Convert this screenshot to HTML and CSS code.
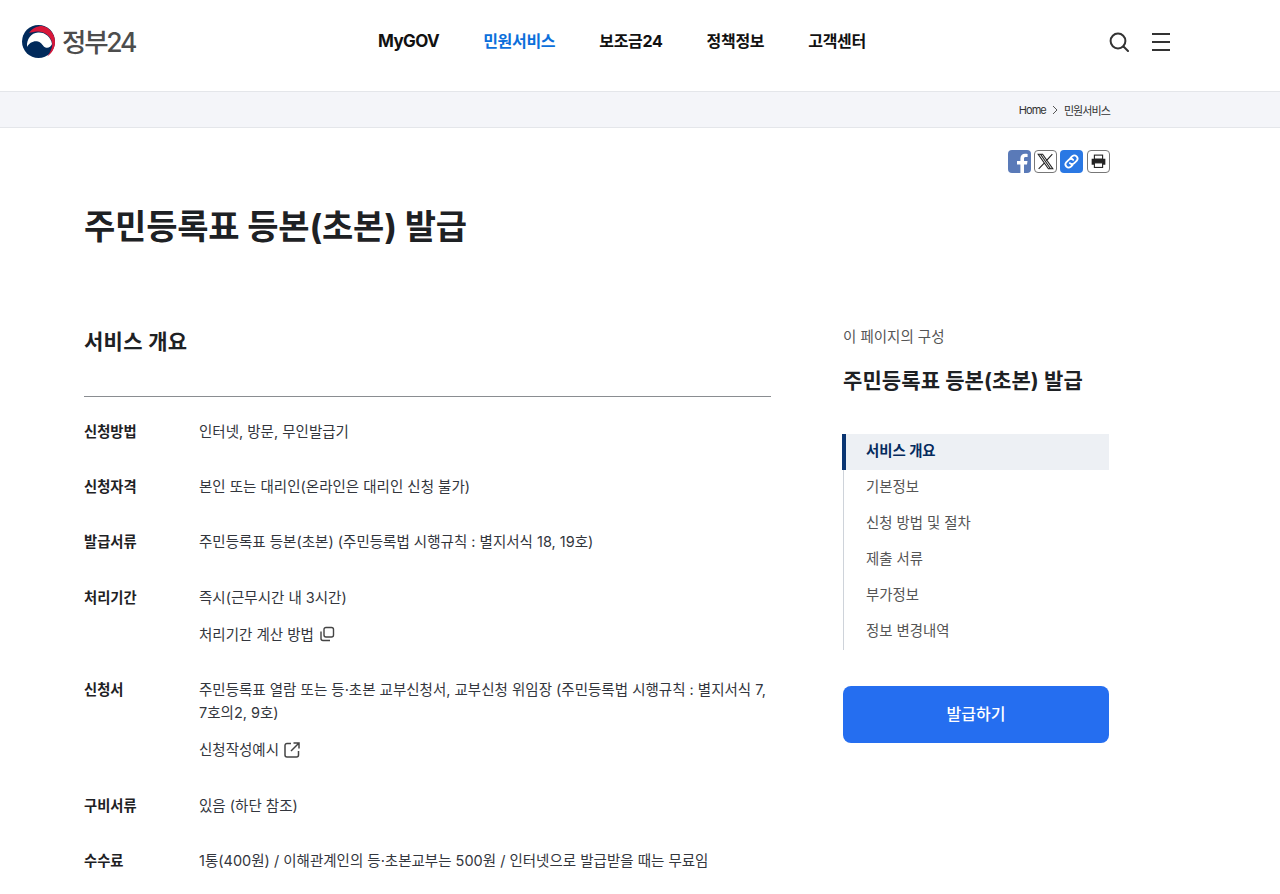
FILE: index.html
```html
<!DOCTYPE html>
<html lang="ko">
<head>
<meta charset="utf-8">
<title>주민등록표 등본(초본) 발급 | 정부24</title>
<link rel="stylesheet" href="styles.css">
</head>
<body>
<header class="header">
  <a class="logo" href="#">
    <svg class="logo-mark" viewBox="4 5 33 33" width="33" height="33" aria-hidden="true">
      <circle cx="20.500" cy="21.500" r="16.500" fill="#012a5b"/>
      <path d="M11 13C14 8.500 19 6 24 6c7.500 1 13 8 13 16 0 6-3 11-7.500 14.500C33 31 35 26 34 22 32 15 25 11 19 11.500 16 11.800 13 12.500 11 13Z" fill="#d8173a"/>
      <path d="M9 27C8.500 19 13 13 20 12.500 27 12 33 17 34 24 33 27 30 28.500 27.500 27.500 24.500 26.300 24 22.500 20 21.500 15.500 20.500 11 23 9 27Z" fill="#fff"/>
    </svg>
    <span class="logo-text">정부24</span>
  </a>
  <nav class="gnb">
    <a href="#" class="gnb-en">MyGOV</a>
    <a href="#" class="is-current">민원서비스</a>
    <a href="#">보조금24</a>
    <a href="#">정책정보</a>
    <a href="#">고객센터</a>
  </nav>
  <div class="header-tools">
    <svg viewBox="0 0 20 20" width="20" height="20" aria-hidden="true"><circle cx="9" cy="9" r="7.400" fill="none" stroke="#333" stroke-width="2"/><path d="M14.500 14.500L19 19" stroke="#333" stroke-width="2" stroke-linecap="round"/></svg>
    <svg viewBox="0 0 18 18" width="18" height="18" aria-hidden="true"><path d="M0 1h18M0 9h18M0 17h18" stroke="#333" stroke-width="2"/></svg>
  </div>
</header>
<div class="crumbs">
  <div class="crumbs-in">
    <span>Home</span>
    <svg viewBox="0 0 6 10" width="6" height="10" aria-hidden="true"><path d="M1 1l4 4-4 4" fill="none" stroke="#555" stroke-width="1"/></svg>
    <span>민원서비스</span>
  </div>
</div>
<div class="share">
  <span class="sns sns-fb"><svg viewBox="0 0 23 23" width="23" height="23" aria-hidden="true"><path d="M16 23v-8.500h3l.500-3.500H16V8.800c0-1 .400-1.700 1.800-1.700h1.800V4c-.5-.1-1.500-.2-2.600-.2-2.800 0-4.600 1.700-4.600 4.700V11H9v3.500h3.400V23z" fill="#fff"/></svg></span>
  <span class="sns sns-line"><svg viewBox="0 0 23 23" width="21" height="21" aria-hidden="true"><path d="M3.500 3.500h4.800L19.500 19.500h-4.800zM6 3.500l11 16M19 3.500L12.300 10.800M10.400 13L4 19.500" fill="none" stroke="#222" stroke-width="1.200"/></svg></span>
  <span class="sns sns-link"><svg viewBox="0 0 23 23" width="23" height="23" aria-hidden="true"><g fill="none" stroke="#fff" stroke-width="1.800" stroke-linecap="round"><path d="M10.500 8l1.800-1.800a3.200 3.200 0 0 1 4.500 4.500L14.300 13.200a3.200 3.200 0 0 1-4.500 0"/><path d="M12.500 15l-1.800 1.800a3.200 3.200 0 0 1-4.500-4.500L8.700 9.800a3.200 3.200 0 0 1 4.500 0"/></g></svg></span>
  <span class="sns sns-line sns-print"><svg viewBox="0 0 23 23" width="21" height="21" aria-hidden="true"><rect x="7" y="4.500" width="9" height="4.500" fill="#fff" stroke="#222" stroke-width="1.200"/><path d="M4 8.500h15v6.500h-15z" fill="#222"/><rect x="7" y="13" width="9" height="5" fill="#fff" stroke="#222" stroke-width="1.200"/></svg></span>
</div>
<h1 class="page-title">주민등록표 등본(초본) 발급</h1>
<div class="layout">
  <main class="content">
    <h2 class="section-title">서비스 개요</h2>
    <dl class="info">
      <div class="row"><dt>신청방법</dt><dd><p>인터넷, 방문, 무인발급기</p></dd></div>
      <div class="row"><dt>신청자격</dt><dd><p>본인 또는 대리인(온라인은 대리인 신청 불가)</p></dd></div>
      <div class="row"><dt>발급서류</dt><dd><p>주민등록표 등본(초본) (주민등록법 시행규칙 : 별지서식 18, 19호)</p></dd></div>
      <div class="row"><dt>처리기간</dt><dd><p>즉시(근무시간 내 3시간)</p>
        <p class="extra">처리기간 계산 방법
          <svg class="ic" viewBox="0 0 16 16" width="16" height="16" aria-hidden="true"><rect x="5" y="1.500" width="9.500" height="9.500" rx="2" fill="none" stroke="#444" stroke-width="1.400"/><path d="M2 5.500v7a2 2 0 0 0 2 2h7" fill="none" stroke="#444" stroke-width="1.400"/></svg></p></dd></div>
      <div class="row"><dt>신청서</dt><dd><p>주민등록표 열람 또는 등·초본 교부신청서, 교부신청 위임장 (주민등록법 시행규칙 : 별지서식 7, 7호의2, 9호)</p>
        <p class="extra">신청작성예시
          <svg class="ic" viewBox="0 0 16 16" width="16" height="16" aria-hidden="true"><path d="M7 1.500H3a2 2 0 0 0-2 2V13a2 2 0 0 0 2 2h9.500a2 2 0 0 0 2-2V9M9.500 1H15v5.500M15 1L7 9" fill="none" stroke="#444" stroke-width="1.500"/></svg></p></dd></div>
      <div class="row"><dt>구비서류</dt><dd><p>있음 (하단 참조)</p></dd></div>
      <div class="row"><dt>수수료</dt><dd><p>1통(400원) / 이해관계인의 등·초본교부는 500원 / 인터넷으로 발급받을 때는 무료임</p></dd></div>
    </dl>
  </main>
  <aside class="side">
    <p class="side-cap">이 페이지의 구성</p>
    <p class="side-title">주민등록표 등본(초본) 발급</p>
    <ul class="toc">
      <li class="is-active">서비스 개요</li>
      <li>기본정보</li>
      <li>신청 방법 및 절차</li>
      <li>제출 서류</li>
      <li>부가정보</li>
      <li>정보 변경내역</li>
    </ul>
    <a class="apply" href="#">발급하기</a>
  </aside>
</div>
</body>
</html>
```
FILE: styles.css
```css
* { box-sizing: border-box; }
html, body { margin: 0; padding: 0; height: 894px; overflow: hidden; background: #fff; }
body { font-family: Inter, "Noto Sans CJK KR", "Noto Sans", sans-serif; color: #1e2124; }
a { color: inherit; text-decoration: none; }
p, ul, dl, dd, dt, h1, h2 { margin: 0; padding: 0; }

.header { height: 92px; border-bottom: 1px solid #e4e6ea; display: flex; align-items: center; padding: 0 109px 8px 22px; justify-content: space-between; }
.logo { display: flex; align-items: center; gap: 7px; width: 200px; }
.logo-mark { display: block; }
.logo-text { font-size: 26.500px; font-weight: 500; color: #4d4d4d; letter-spacing: -2.200px; line-height: 32px; }
.gnb { display: flex; gap: 44px; font-size: 16px; font-weight: 700; letter-spacing: -0.3px; line-height: 22px; margin: 0 0 2px -87px; color: #111; }
.gnb-en { font-size: 17px; letter-spacing: -0.6px; }
.gnb .is-current { color: #0b6fdb; }
.header-tools { display: flex; align-items: center; gap: 23px; width: 62px; }
.header-tools svg { display: block; }

.crumbs { height: 36px; background: #f4f5f9; border-bottom: 1px solid #e4e6ea; }
.crumbs-in { width: 1110px; height: 35px; display: flex; align-items: center; justify-content: flex-end; gap: 6px; font-size: 11px; letter-spacing: -0.9px; color: #333; }

.share { width: 1110px; display: flex; justify-content: flex-end; gap: 3px; padding-top: 22px; }
.sns { width: 23px; height: 23px; border-radius: 4px; display: flex; align-items: center; justify-content: center; overflow: hidden; }
.sns-fb { background: #5a7ab8; align-items: flex-end; }
.sns-line { background: #fff; border: 1px solid #777; }
.sns-link { background: #2a78e4; }
.sns-print { margin-left: 1px; }

.page-title { margin: 32px 0 0 84px; font-size: 34px; line-height: 44px; font-weight: 700; letter-spacing: -0.2px; color: #1e2124; }

.layout { display: grid; grid-template-columns: 687px 266px; column-gap: 72px; margin: 68px 0 0 84px; }
.section-title { font-size: 21px; line-height: 32px; font-weight: 700; letter-spacing: 0.3px; padding: 9px 0 38px; border-bottom: 1px solid #8a8d91; }
.info { padding-top: 23px; }
.row { display: flex; margin-bottom: 32px; font-size: 14.5px; line-height: 23.2px; }
.row dt { width: 115px; flex: none; font-weight: 700; font-size: 14.3px; }
.row dd { flex: 1; color: #33363d; }
.extra { margin-top: 14px; display: flex; align-items: center; gap: 5px; }
.ic { display: block; }

.side { padding-top: 8px; }
.side-cap { font-size: 14.5px; line-height: 24px; color: #555; }
.side-title { margin-top: 16px; font-size: 21px; line-height: 32px; font-weight: 700; letter-spacing: 0.1px; }
.toc { list-style: none; margin-top: 37px; border-left: 1px solid #ced3da; }
.toc li { height: 36px; padding-left: 22px; font-size: 14.4px; line-height: 33px; color: #555; }
.toc .is-active { background: #edf0f4; color: #052b5e; font-weight: 700; box-shadow: inset 2px 0 0 #0a3572, -2px 0 0 #0a3572; }
.apply { display: block; margin-top: 36px; height: 57px; border-radius: 8px; background: #256ef0; color: #fff; font-size: 16px; font-weight: 500; line-height: 56px; text-align: center; }
```
